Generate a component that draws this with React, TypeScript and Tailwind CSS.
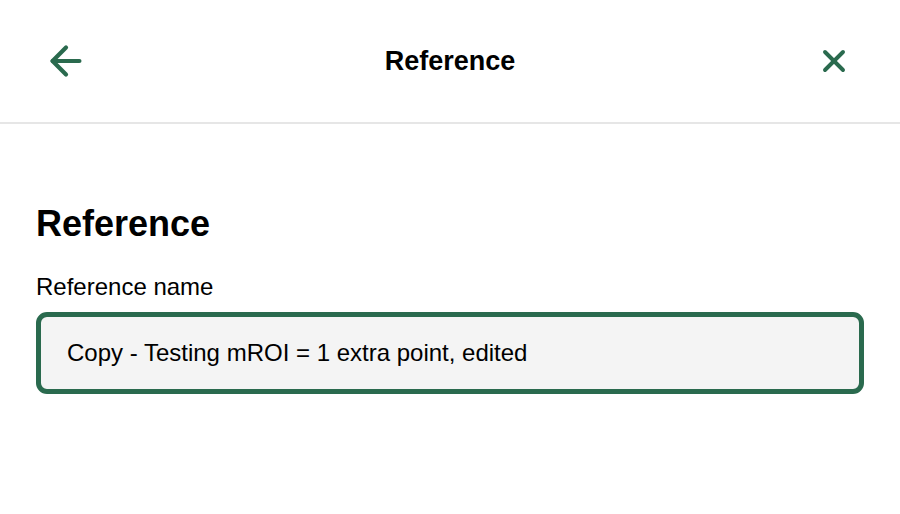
import { ArrowLeft, X } from 'lucide-react'

export default function App() {
  return (
    <div className="h-[514px] w-[900px] bg-white font-['Liberation_Sans',Arial,sans-serif] text-black">
      <header className="grid h-[124px] grid-cols-[1fr_auto_1fr] items-center border-b-2 border-[#e6e6e6] px-[45px]">
        <button className="-ml-[2px] flex items-center justify-self-start text-[#2a6a4e]">
          <ArrowLeft size={46} strokeWidth={2.2} />
        </button>
        <h1 className="text-[27px] font-bold">Reference</h1>
        <button className="mr-[3px] flex items-center justify-self-end text-[#2a6a4e]">
          <X size={36} strokeWidth={2.6} />
        </button>
      </header>

      <main className="px-[36px] pt-[82px]">
        <h2 className="text-[36px] font-bold leading-none">Reference</h2>
        <label className="mt-[33px] block text-[24px] leading-none">Reference name</label>
        <div className="mt-[13px] flex h-[82px] items-center rounded-[11px] border-[5px] border-[#2a6a4e] bg-[#f4f4f4] px-[26px]">
          <span className="text-[24px]">Copy - Testing mROI = 1 extra point, edited</span>
        </div>
      </main>
    </div>
  )
}
